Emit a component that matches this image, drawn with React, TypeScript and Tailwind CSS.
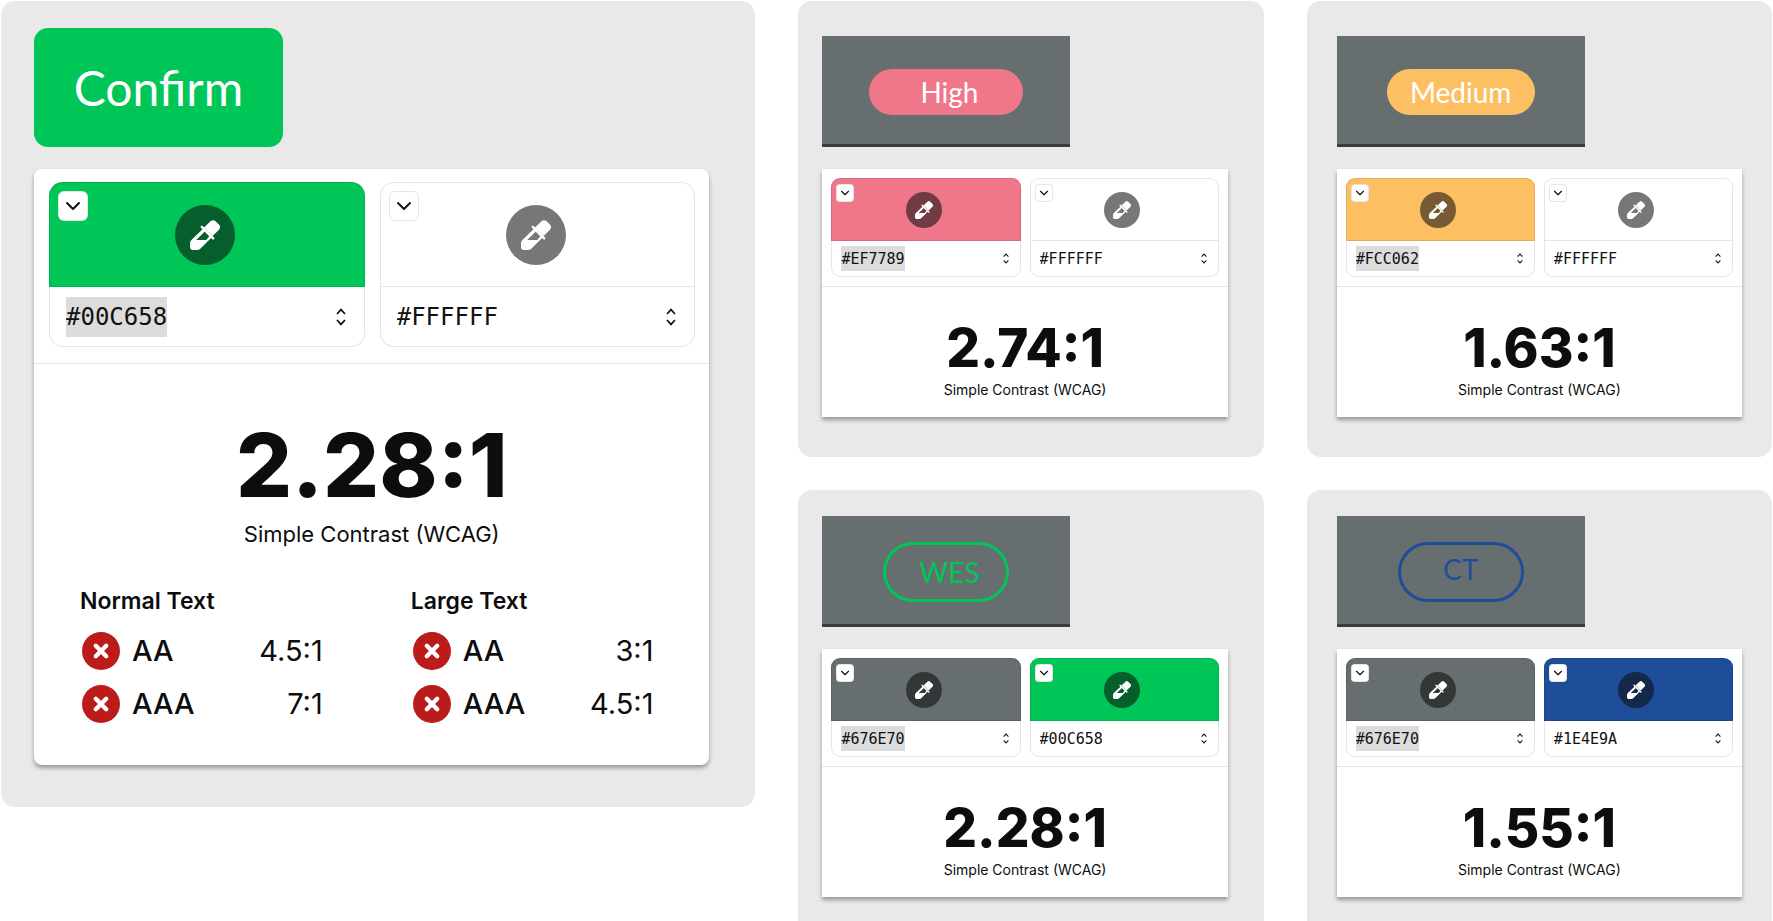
import { ChevronDown } from "lucide-react";
import { clsx } from "clsx";

type Swatch = { id: string; hex: string; fill: string; selected?: boolean };

const GREEN = "bg-[#00c658]";
const GRAY = "bg-[#676e70]";
const WHITE = "bg-white";

const examples = [
  {
    id: "high",
    label: "High",
    chip: "w-[154px] pl-[6px] py-[3px] bg-[#ef7789] text-white",
    ratio: "2.74:1",
    panel: "pl-6 pr-9 pt-[35px] pb-10 rounded-[14px]",
    swatches: [
      { id: "high-fg", hex: "#EF7789", fill: "bg-[#ef7789]", selected: true },
      { id: "high-bg", hex: "#FFFFFF", fill: WHITE },
    ],
  },
  {
    id: "medium",
    label: "Medium",
    chip: "w-[148px] py-[3px] bg-[#fcc062] text-white",
    ratio: "1.63:1",
    panel: "px-[30px] pt-[35px] pb-10 rounded-[14px]",
    swatches: [
      { id: "medium-fg", hex: "#FCC062", fill: "bg-[#fcc062]", selected: true },
      { id: "medium-bg", hex: "#FFFFFF", fill: WHITE },
    ],
  },
  {
    id: "wes",
    label: "WES",
    chip: "w-[126px] pl-[6px] py-[7px] border-3 border-[#00c658] text-[#00c658]",
    ratio: "2.28:1",
    panel: "pl-6 pr-9 pt-[26px] pb-[25px] rounded-t-[14px]",
    swatches: [
      { id: "wes-fg", hex: "#676E70", fill: GRAY, selected: true },
      { id: "wes-bg", hex: "#00C658", fill: GREEN },
    ],
  },
  {
    id: "ct",
    label: "CT",
    chip: "w-[126px] pt-1 pb-[10px] border-3 border-[#1e4e9a] text-[#1e4e9a]",
    ratio: "1.55:1",
    panel: "px-[30px] pt-[26px] pb-[25px] rounded-t-[14px]",
    swatches: [
      { id: "ct-fg", hex: "#676E70", fill: GRAY, selected: true },
      { id: "ct-bg", hex: "#1E4E9A", fill: "bg-[#1e4e9a]" },
    ],
  },
];

const confirmSwatches: Swatch[] = [
  { id: "confirm-fg", hex: "#00C658", fill: GREEN, selected: true },
  { id: "confirm-bg", hex: "#FFFFFF", fill: WHITE },
];

const results = [
  {
    title: "Normal Text",
    rows: [
      { level: "AA", min: "4.5:1" },
      { level: "AAA", min: "7:1" },
    ],
  },
  {
    title: "Large Text",
    rows: [
      { level: "AA", min: "3:1" },
      { level: "AAA", min: "4.5:1" },
    ],
  },
];

const Eyedropper = ({ className }: { className: string }) => (
  <svg viewBox="0 0 30 30" className={className} fill="white" aria-hidden="true">
    <path d="M14 7.6 20.8 1.1Q23-.8 25.3 1.1L29.1 4.8Q31 7.1 29.2 9.4L22.6 16Z" />
    <path d="M11.8 6.9 23.2 18.4" stroke="white" strokeWidth="2.4" strokeLinecap="round" />
    <path
      fillRule="evenodd"
      d="M12.8 9 1.4 20Q0 21.4 0 23.4V27.6Q0 30 2.5 30H7Q9 30 10.3 28.7L21.6 17.4ZM14.8 11.6 19.4 16.2 16.2 19.9H6.2Z"
    />
  </svg>
);

const Unfold = ({ className }: { className: string }) => (
  <svg viewBox="0 0 10 18" className={className} fill="none" stroke="#111" strokeWidth="1.7" aria-hidden="true">
    <path d="M1 6 5 1.6 9 6M1 12 5 16.4 9 12" />
  </svg>
);

const ColorSwatch = ({ swatch, large }: { swatch: Swatch; large?: boolean }) => (
  <div className="flex-1 min-w-0">
    <div
      className={clsx(
        "relative flex items-center justify-center pr-1 border border-black/10",
        swatch.fill,
        large ? "h-[105px] rounded-t-[14px]" : "h-[63px] rounded-t-[9px]"
      )}
    >
      <button
        aria-label={`Options for ${swatch.hex}`}
        className={clsx(
          "absolute flex items-center justify-center bg-white border border-black/10 text-[#111]",
          large ? "top-2 left-2 size-[30px] rounded-md" : "top-[5px] left-1 size-[18px] rounded"
        )}
      >
        <ChevronDown className={large ? "size-6" : "size-[14px]"} strokeWidth={2} />
      </button>
      <button
        aria-label={`Pick ${swatch.hex}`}
        className={clsx(
          "flex items-center justify-center rounded-full bg-[#0c0c0c]/56",
          large ? "size-[60px]" : "size-9"
        )}
      >
        <Eyedropper className={large ? "size-[30px]" : "size-[18px]"} />
      </button>
    </div>
    <div
      className={clsx(
        "flex items-center justify-between border border-t-0 border-[#e5e5e5]",
        large ? "h-[60px] pl-4 pr-[18px] rounded-b-[14px]" : "h-9 pl-[9px] pr-[11px] rounded-b-[9px]"
      )}
    >
      <input
        id={swatch.id}
        aria-label="Hex color"
        defaultValue={swatch.hex}
        className={clsx(
          "field-sizing-content font-['DejaVu_Sans_Mono',monospace] text-[#111] outline-none",
          swatch.selected && "bg-[#dcdcdc]",
          large ? "h-10 text-2xl" : "h-[25px] text-[15px]"
        )}
      />
      <button aria-label={`Change format of ${swatch.hex}`}>
        <Unfold className={large ? "w-[10px] h-[18px]" : "w-[6px] h-[11px]"} />
      </button>
    </div>
  </div>
);

const Ratio = ({ value, large }: { value: string; large?: boolean }) => (
  <div
    className={clsx(
      "flex flex-col items-center border-t border-[#e5e5e5] text-[#0d0d0d]",
      large ? "pt-[57px]" : "pt-[35px] pb-[17px]"
    )}
  >
    <p className={clsx("font-extrabold", large ? "text-[88px] leading-[88px]" : "text-[53px] leading-[52px]")}>
      {value}
    </p>
    <p className={large ? "mt-[9px] text-[22px] leading-8" : "mt-[6px] text-sm leading-5"}>Simple Contrast (WCAG)</p>
  </div>
);

const cardShadow = "shadow-[0_3px_4px_rgba(0,0,0,0.35)]";

const App = () => {
  return (
    <main className="grid grid-cols-[754fr_465fr_465fr] gap-x-[43px] px-px pt-px bg-white font-['Inter',sans-serif]">
      <section className="row-span-2 self-start pl-[33px] pr-[46px] pt-[27px] pb-[42px] rounded-[14px] bg-[#e9e9e9]">
        <button className="block w-[249px] h-[119px] rounded-[14px] bg-[#00c658] text-white font-['Lato',sans-serif] text-5xl">
          Confirm
        </button>
        <div className={clsx("mt-[22px] bg-white rounded-lg pb-[35px]", cardShadow)}>
          <div className="flex gap-[15px] pl-[15px] pr-[14px] pt-[13px] pb-4">
            {confirmSwatches.map((swatch) => (
              <ColorSwatch key={swatch.id} swatch={swatch} large />
            ))}
          </div>
          <Ratio value="2.28:1" large />
          <div className="flex gap-[15px] pl-[15px] pr-[14px] mt-[35px] text-[#0d0d0d]">
            {results.map((result) => (
              <div key={result.title} className="flex-1 pl-[31px] pr-[42px]">
                <h2 className="font-semibold text-[23px] leading-8">{result.title}</h2>
                <ul className="mt-[7px]">
                  {result.rows.map((row) => (
                    <li key={row.level} className="flex items-center h-[53px] pl-[2px] text-[29px]">
                      <svg viewBox="0 0 38 38" className="size-[38px] mr-3" aria-hidden="true">
                        <circle cx="19" cy="19" r="19" fill="#bb1b1b" />
                        <path d="M13.8 13.8 24.2 24.2M24.2 13.8 13.8 24.2" stroke="white" strokeWidth="4.4" strokeLinecap="round" />
                      </svg>
                      <span className="font-medium">{row.level}</span>
                      <span className="ml-auto">{row.min}</span>
                    </li>
                  ))}
                </ul>
              </div>
            ))}
          </div>
        </div>
      </section>

      {examples.map((example, index) => (
        <section key={example.id} className={clsx("bg-[#e9e9e9]", index > 1 && "mt-[33px]", example.panel)}>
          <div className="flex items-center justify-center w-[248px] h-[111px] pt-1 bg-[#676e70] border-b-3 border-[#3d3a3b]">
            <span
              className={clsx(
                "rounded-full text-center font-['Lato',sans-serif] text-[28px] leading-10",
                example.chip
              )}
            >
              {example.label}
            </span>
          </div>
          <div className={clsx("mt-[22px] bg-white", cardShadow)}>
            <div className="flex gap-[9px] p-[9px]">
              {example.swatches.map((swatch) => (
                <ColorSwatch key={swatch.id} swatch={swatch} />
              ))}
            </div>
            <Ratio value={example.ratio} />
          </div>
        </section>
      ))}
    </main>
  );
};

export default App;
